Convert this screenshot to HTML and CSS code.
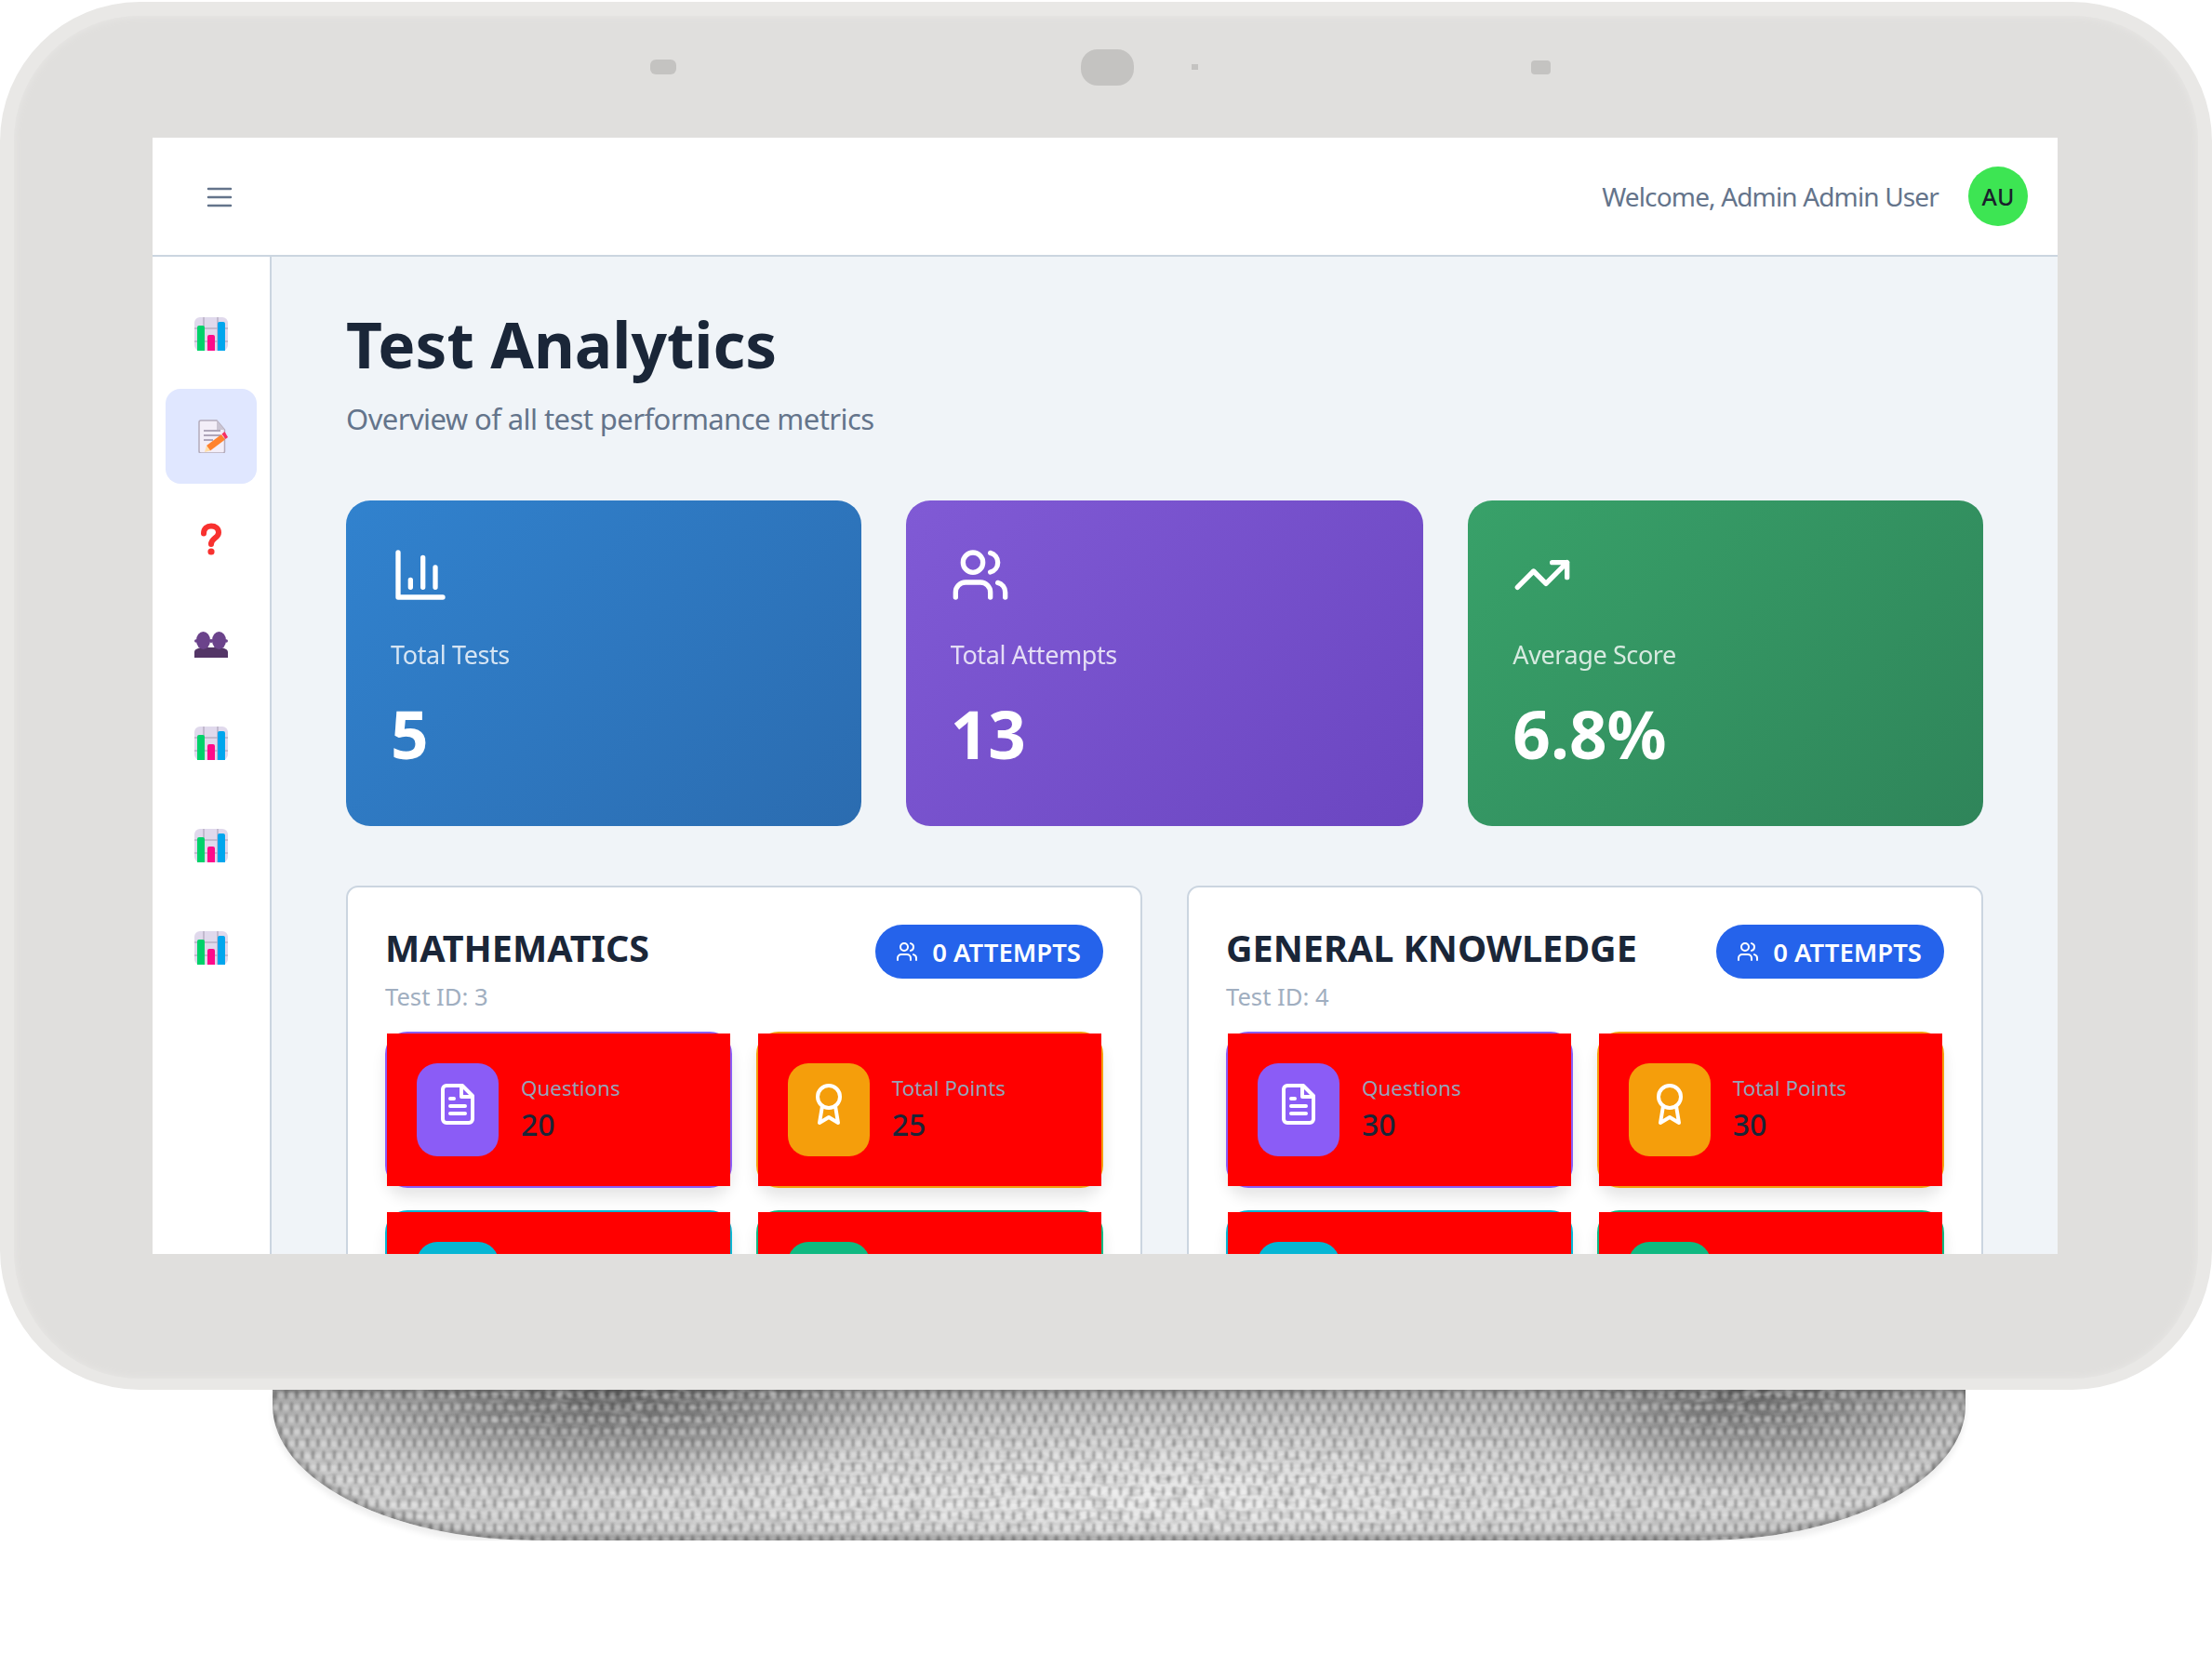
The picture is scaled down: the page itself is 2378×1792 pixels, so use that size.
FILE: index.html
```html
<!DOCTYPE html>
<html lang="en">
<head>
    <meta charset="UTF-8">
    <meta name="viewport" content="width=device-width, initial-scale=1.0">
    <title>Test Analytics</title>
    <link rel="stylesheet" href="styles.css">
</head>
<body>
    <svg class="defs" width="0" height="0" aria-hidden="true">
        <defs>
            <symbol id="emoji-chart" viewBox="0 0 36 36">
                <rect x="0" y="0" width="36" height="36" rx="6" fill="#e0d9ec"/>
                <path d="M10 0v36M25 0v36M0 12h36M0 26h36" stroke="#b8b0c4" stroke-width="1.5"/>
                <path d="M3 11a2 2 0 0 1 2-2h4a2 2 0 0 1 2 2v25H3z" fill="#00d26a"/>
                <path d="M14 21a2 2 0 0 1 2-2h4a2 2 0 0 1 2 2v15h-8z" fill="#ff0a8a"/>
                <path d="M25 7a2 2 0 0 1 2-2h4a2 2 0 0 1 2 2v29h-8z" fill="#00a6ed"/>
            </symbol>
            <symbol id="icon-users" viewBox="0 0 24 24">
                <path d="M16 21v-2a4 4 0 0 0-4-4H6a4 4 0 0 0-4 4v2"/>
                <circle cx="9" cy="7" r="4"/>
                <path d="M22 21v-2a4 4 0 0 0-3-3.87"/>
                <path d="M16 3.13a4 4 0 0 1 0 7.75"/>
            </symbol>
            <symbol id="icon-file" viewBox="0 0 24 24">
                <path d="M14.5 2H6a2 2 0 0 0-2 2v16a2 2 0 0 0 2 2h12a2 2 0 0 0 2-2V7.5L14.5 2z"/>
                <path d="M14 2v6h6M16 13H8M16 17H8M10 9H8"/>
            </symbol>
            <symbol id="icon-award" viewBox="0 0 24 24">
                <circle cx="12" cy="8" r="6"/>
                <path d="M15.477 12.89 17 22l-5-3-5 3 1.523-9.11"/>
            </symbol>
            <pattern id="weave" width="23" height="26" patternUnits="userSpaceOnUse">
                <g fill="#4e4e4e" fill-opacity=".32">
                    <ellipse cx="3" cy="5" rx="2.2" ry="5"/>
                    <ellipse cx="14.5" cy="5" rx="2.2" ry="5"/>
                    <ellipse cx="9" cy="18" rx="2.2" ry="5"/>
                    <ellipse cx="20.5" cy="18" rx="2.2" ry="5"/>
                </g>
                <g fill="#ffffff" fill-opacity=".3">
                    <ellipse cx="9" cy="6" rx="3" ry="3.4"/>
                    <ellipse cx="20.5" cy="6" rx="3" ry="3.4"/>
                    <ellipse cx="3" cy="19" rx="3" ry="3.4"/>
                    <ellipse cx="14.5" cy="19" rx="3" ry="3.4"/>
                </g>
            </pattern>
            <filter id="soften">
                <feGaussianBlur stdDeviation="1.3"/>
            </filter>
            <filter id="mottle" x="0" y="0" width="100%" height="100%">
                <feTurbulence type="fractalNoise" baseFrequency=".06 .14" numOctaves="2" seed="4"/>
                <feColorMatrix values="0 0 0 0 .4  0 0 0 0 .4  0 0 0 0 .4  1.5 0 0 0 -.6"/>
            </filter>
        </defs>
    </svg>

    <div class="device">
        <div class="sensors">
            <span class="sensor sensor-left"></span>
            <span class="sensor camera"></span>
            <span class="sensor dot"></span>
            <span class="sensor sensor-right"></span>
        </div>

        <div class="screen">
            <header class="topbar">
                <svg class="menu-icon" viewBox="0 0 24 24"><path d="M4 6h16M4 12h16M4 18h16"/></svg>
                <div class="user">
                    <span class="welcome">Welcome, Admin Admin User</span>
                    <span class="avatar">AU</span>
                </div>
            </header>

            <div class="layout">
                <nav class="sidebar">
                    <a class="nav-item"><svg class="emoji"><use href="#emoji-chart"/></svg></a>
                    <a class="nav-item active">
                        <svg class="emoji" viewBox="0 0 36 36">
                            <path d="M5 3a2 2 0 0 1 2-2h17l8.500 10v23a2 2 0 0 1-2 2H7a2 2 0 0 1-2-2z" fill="#f3eef8" stroke="#b4acbc" stroke-width="1.5"/>
                            <path d="M24 1v10h8.500z" fill="#cac4d2"/>
                            <path d="M10 12h18M10 17h18M10 22h10" stroke="#998ea4" stroke-width="1.4"/>
                            <path d="M13 28l4 5.500L33 21.500 29 16z" fill="#ff822d"/>
                            <path d="M13 28l4 5.500-6 1.500z" fill="#ffdea7"/>
                            <path d="M29.500 15.500l4 5.500 2.500-2-3.500-6z" fill="#f92f60"/>
                        </svg>
                    </a>
                    <a class="nav-item">
                        <svg class="emoji" viewBox="0 0 36 36">
                            <path d="M10 12.5C10 7 13.500 4.500 18 4.500S26 7 26 11.500c0 6-8 6-8 12.500" fill="none" stroke="#f8312f" stroke-width="6" stroke-linecap="round"/>
                            <circle cx="18" cy="32" r="3.600" fill="#f8312f"/>
                        </svg>
                    </a>
                    <a class="nav-item">
                        <svg class="emoji-people" viewBox="0 0 36 28">
                            <path d="M0 28v-6c0-3 4-4 7-5h22c3 1 7 2 7 5v6z" fill="#533566"/>
                            <g fill="#6b438b">
                                <ellipse cx="9.500" cy="9.500" rx="7.500" ry="9.500"/>
                                <ellipse cx="26.500" cy="9.500" rx="7.500" ry="9.500"/>
                                <circle cx="1.800" cy="10" r="1.800"/>
                                <circle cx="18" cy="10" r="2"/>
                                <circle cx="34.200" cy="10" r="1.800"/>
                            </g>
                        </svg>
                    </a>
                    <a class="nav-item"><svg class="emoji"><use href="#emoji-chart"/></svg></a>
                    <a class="nav-item"><svg class="emoji"><use href="#emoji-chart"/></svg></a>
                    <a class="nav-item"><svg class="emoji"><use href="#emoji-chart"/></svg></a>
                </nav>

                <main class="main">
                    <h1>Test Analytics</h1>
                    <p class="subtitle">Overview of all test performance metrics</p>

                    <section class="summary">
                        <div class="summary-card blue">
                            <svg class="summary-icon" viewBox="0 0 24 24"><path d="M3 3v18h18M18 17V9M13 17V5M8 17v-3"/></svg>
                            <div class="summary-label">Total Tests</div>
                            <div class="summary-value">5</div>
                        </div>
                        <div class="summary-card purple">
                            <svg class="summary-icon"><use href="#icon-users"/></svg>
                            <div class="summary-label">Total Attempts</div>
                            <div class="summary-value">13</div>
                        </div>
                        <div class="summary-card green">
                            <svg class="summary-icon" viewBox="0 0 24 24"><path d="M22 7l-8.500 8.500-5-5L2 17M16 7h6v6"/></svg>
                            <div class="summary-label">Average Score</div>
                            <div class="summary-value">6.8%</div>
                        </div>
                    </section>

                    <section class="tests">
                        <article class="test-card">
                            <div class="test-head">
                                <h2>Mathematics</h2>
                                <span class="badge"><svg><use href="#icon-users"/></svg>0 Attempts</span>
                            </div>
                            <div class="test-id">Test ID: 3</div>
                            <div class="stats">
                                <div class="stat border-violet">
                                    <div class="stat-inner">
                                        <span class="stat-icon bg-violet"><svg><use href="#icon-file"/></svg></span>
                                        <div><div class="stat-label">Questions</div><div class="stat-value">20</div></div>
                                    </div>
                                </div>
                                <div class="stat border-amber">
                                    <div class="stat-inner">
                                        <span class="stat-icon bg-amber"><svg><use href="#icon-award"/></svg></span>
                                        <div><div class="stat-label">Total Points</div><div class="stat-value">25</div></div>
                                    </div>
                                </div>
                                <div class="stat border-cyan">
                                    <div class="stat-inner"><span class="stat-icon bg-cyan"></span></div>
                                </div>
                                <div class="stat border-emerald">
                                    <div class="stat-inner"><span class="stat-icon bg-emerald"></span></div>
                                </div>
                            </div>
                        </article>

                        <article class="test-card">
                            <div class="test-head">
                                <h2>General Knowledge</h2>
                                <span class="badge"><svg><use href="#icon-users"/></svg>0 Attempts</span>
                            </div>
                            <div class="test-id">Test ID: 4</div>
                            <div class="stats">
                                <div class="stat border-violet">
                                    <div class="stat-inner">
                                        <span class="stat-icon bg-violet"><svg><use href="#icon-file"/></svg></span>
                                        <div><div class="stat-label">Questions</div><div class="stat-value">30</div></div>
                                    </div>
                                </div>
                                <div class="stat border-amber">
                                    <div class="stat-inner">
                                        <span class="stat-icon bg-amber"><svg><use href="#icon-award"/></svg></span>
                                        <div><div class="stat-label">Total Points</div><div class="stat-value">30</div></div>
                                    </div>
                                </div>
                                <div class="stat border-cyan">
                                    <div class="stat-inner"><span class="stat-icon bg-cyan"></span></div>
                                </div>
                                <div class="stat border-emerald">
                                    <div class="stat-inner"><span class="stat-icon bg-emerald"></span></div>
                                </div>
                            </div>
                        </article>
                    </section>
                </main>
            </div>
        </div>
    </div>

    <div class="stand">
        <svg class="weave" width="100%" height="100%">
            <rect width="100%" height="100%" filter="url(#mottle)"/>
            <rect width="100%" height="100%" fill="url(#weave)" filter="url(#soften)"/>
        </svg>
    </div>
</body>
</html>
```

FILE: styles.css
```css
* {
    box-sizing: border-box;
}
body {
    margin: 0;
    background: #fff;
    font-family: "Noto Sans", "Open Sans", sans-serif;
    color: #1a202c;
    overflow: hidden;
}
.defs {
    display: block;
    height: 0;
}

/* device shell */
.device {
    position: relative;
    z-index: 1;
    width: 2378px;
    height: 1492px;
    margin-top: 2px;
    padding: 0 150px 0 149px;
    background: #e0dfdd;
    border: 15px solid #e9e8e6;
    border-bottom-width: 12px;
    border-radius: 150px;
    box-shadow: inset 0 0 8px #e9e8e6;
}
.sensors {
    display: flex;
    align-items: center;
    height: 131px;
    padding-bottom: 21px;
}
.sensor {
    display: block;
    background: #c4c3c1;
}
.sensor-left {
    width: 28px;
    height: 16px;
    margin-left: 535px;
    border-radius: 6px;
}
.camera {
    width: 57px;
    height: 39px;
    margin-left: 435px;
    border-radius: 18px;
}
.dot {
    width: 7px;
    height: 6px;
    margin-left: 62px;
}
.sensor-right {
    width: 21px;
    height: 15px;
    margin-left: 358px;
    border-radius: 4px;
}

.screen {
    width: 2048px;
    height: 1200px;
    background: #f0f4f8;
    overflow: hidden;
}

/* top bar */
.topbar {
    display: flex;
    align-items: center;
    justify-content: space-between;
    height: 128px;
    padding: 0 32px 0 54px;
    background: #fff;
    border-bottom: 2px solid #cbd5e0;
}
.menu-icon {
    width: 36px;
    height: 36px;
    margin-top: 1px;
    fill: none;
    stroke: #64748b;
    stroke-width: 1.7;
    stroke-linecap: round;
}
.user {
    display: flex;
    align-items: center;
    gap: 32px;
}
.welcome {
    font-size: 28px;
    letter-spacing: -.85px;
    color: #64748b;
}
.avatar {
    display: flex;
    align-items: center;
    justify-content: center;
    width: 64px;
    height: 64px;
    border-radius: 50%;
    background: #3de553;
    font-size: 25px;
    font-weight: 500;
}

.layout {
    display: flex;
    height: 1072px;
}

/* sidebar */
.sidebar {
    display: flex;
    flex-direction: column;
    gap: 8px;
    flex: none;
    width: 128px;
    padding: 32px 14px 0;
    background: #fff;
    border-right: 2px solid #cbd5e0;
}
.nav-item {
    display: flex;
    align-items: center;
    justify-content: center;
    flex: none;
    width: 98px;
    height: 102px;
    border-radius: 16px;
}
.nav-item.active {
    background: #e0e7ff;
}
.emoji {
    width: 36px;
    height: 36px;
}
.emoji-people {
    width: 36px;
    height: 28px;
    margin-top: 8px;
}

/* main */
.main {
    flex: 1;
    padding: 48px 80px 0;
}
h1 {
    margin: 0;
    font-size: 67.5px;
    line-height: 92px;
    font-weight: 700;
    color: #1a2638;
}
.subtitle {
    margin: 12px 0 0;
    font-size: 31px;
    line-height: 44px;
    letter-spacing: -.58px;
    color: #64748b;
}

.summary {
    display: grid;
    grid-template-columns: 553fr 556fr 553fr;
    gap: 48px;
    margin-top: 66px;
}
.summary-card {
    height: 350px;
    padding: 48px;
    border-radius: 26px;
    color: #fff;
}
.blue {
    background: linear-gradient(135deg, #3182ce, #2b6cb0);
}
.purple {
    background: linear-gradient(135deg, #805ad5, #6b46c1);
}
.green {
    background: linear-gradient(135deg, #38a169, #2f855a);
}
.summary-icon {
    display: block;
    width: 64px;
    height: 64px;
    fill: none;
    stroke: #fff;
    stroke-width: 2;
    stroke-linecap: round;
    stroke-linejoin: round;
}
.summary-label {
    margin-top: 34px;
    font-size: 27px;
    line-height: 40px;
    letter-spacing: -.4px;
    opacity: .8;
}
.summary-value {
    margin-top: 19px;
    font-size: 71px;
    line-height: 92px;
    font-weight: 700;
}

/* test cards */
.tests {
    display: grid;
    grid-template-columns: repeat(2, 1fr);
    gap: 48px;
    margin-top: 64px;
}
.test-card {
    padding: 40px;
    background: #fff;
    border: 2px solid #cbd5e0;
    border-radius: 13px;
}
.test-head {
    display: flex;
    align-items: flex-start;
    justify-content: space-between;
}
h2 {
    margin: 0;
    font-size: 39.5px;
    line-height: 50px;
    font-weight: 700;
    text-transform: uppercase;
    color: #1a2638;
}
.badge {
    display: flex;
    align-items: center;
    gap: 15px;
    height: 58px;
    padding: 0 24px 0 22px;
    border-radius: 29px;
    background: #2563eb;
    color: #fff;
    font-size: 27.5px;
    font-weight: 600;
    text-transform: uppercase;
}
.badge svg {
    width: 24px;
    height: 24px;
    fill: none;
    stroke: #fff;
    stroke-width: 2;
    stroke-linecap: round;
    stroke-linejoin: round;
}
.test-id {
    margin-top: 3px;
    font-size: 25.6px;
    line-height: 34px;
    color: #a0aec0;
}
.stats {
    display: grid;
    grid-template-columns: repeat(2, 1fr);
    gap: 24px 25.6px;
    margin-top: 19.5px;
}
.stat {
    height: 168px;
    border: 2px solid;
    border-radius: 24px;
    box-shadow: 0 10px 15px rgba(0, 0, 0, .1);
}
.stat-inner {
    display: flex;
    align-items: center;
    gap: 24px;
    height: 164px;
    padding: 0 32px;
    background: #f00;
}
.stat-icon {
    display: flex;
    align-items: center;
    justify-content: center;
    flex: none;
    width: 88px;
    height: 100px;
    padding-bottom: 12px;
    border-radius: 22px;
}
.stat-icon svg {
    width: 48px;
    height: 48px;
    fill: none;
    stroke: #fff;
    stroke-width: 2;
    stroke-linecap: round;
    stroke-linejoin: round;
}
.stat-label {
    font-size: 22.4px;
    line-height: 32px;
    color: #94a3b8;
}
.stat-value {
    margin-top: 1px;
    font-size: 32px;
    line-height: 44px;
    font-weight: 500;
    color: #1a2638;
}
.border-violet { border-color: #8b5cf6; }
.border-amber { border-color: #f59e0b; }
.border-cyan { border-color: #06b6d4; }
.border-emerald { border-color: #10b981; }
.bg-violet { background: #8b5cf6; }
.bg-amber { background: #f59e0b; }
.bg-cyan { background: #06b6d4; }
.bg-emerald { background: #10b981; }

/* fabric stand */
.stand {
    width: 1820px;
    height: 162px;
    margin-left: 293px;
    border-radius: 0 0 285px 285px / 0 0 145px 145px;
    overflow: hidden;
    background:
        linear-gradient(180deg, rgba(90, 90, 90, .4) 0, transparent 12px),
        radial-gradient(ellipse 320px 110px at 20% 0, rgba(50, 50, 50, .65), transparent),
        radial-gradient(ellipse 240px 110px at 87% 0, rgba(50, 50, 50, .6), transparent),
        radial-gradient(ellipse 640px 110px at 52% 70%, rgba(255, 255, 255, .55), transparent),
        linear-gradient(180deg, #a8a8a8 0, #c8c8c8 50%, #d2d2d2 80%, #bcbcbc 100%);
    box-shadow: inset 0 -5px 5px rgba(60, 60, 60, .35), inset 0 0 10px rgba(60, 60, 60, .3), 0 6px 6px rgba(0, 0, 0, .07);
}
.weave {
    display: block;
}
```
